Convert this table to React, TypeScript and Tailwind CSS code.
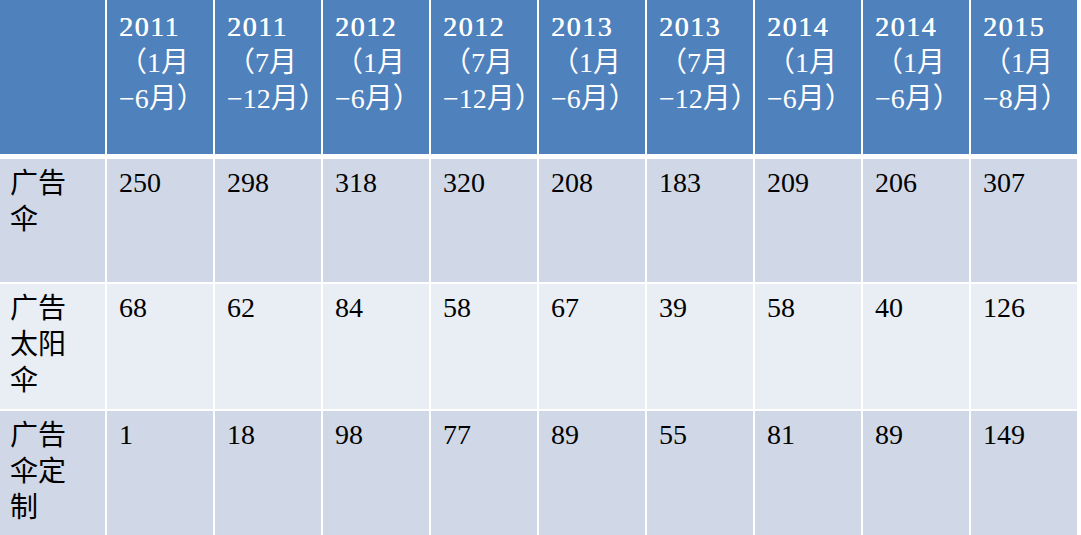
import React from "react";

const headers: [string, string, string][] = [
  ["2011", "（1月", "−6月）"],
  ["2011", "（7月", "−12月）"],
  ["2012", "（1月", "−6月）"],
  ["2012", "（7月", "−12月）"],
  ["2013", "（1月", "−6月）"],
  ["2013", "（7月", "−12月）"],
  ["2014", "（1月", "−6月）"],
  ["2014", "（1月", "−6月）"],
  ["2015", "（1月", "−8月）"],
];

const rows: { label: string[]; values: string[]; bg: string; h: string }[] = [
  {
    label: ["广告", "伞"],
    values: ["250", "298", "318", "320", "208", "183", "209", "206", "307"],
    bg: "bg-[#d0d8e8]",
    h: "h-[123px]",
  },
  {
    label: ["广告", "太阳", "伞"],
    values: ["68", "62", "84", "58", "67", "39", "58", "40", "126"],
    bg: "bg-[#e9edf4]",
    h: "h-[125px]",
  },
  {
    label: ["广告", "伞定", "制"],
    values: ["1", "18", "98", "77", "89", "55", "81", "89", "149"],
    bg: "bg-[#d0d8e8]",
    h: "h-[124px]",
  },
];

const font = "font-['Liberation_Serif','Noto_Sans_CJK_SC',serif]";

export default function App() {
  return (
    <div className={`w-[1081px] h-[535px] bg-white overflow-hidden ${font} text-[28px] leading-[36px]`}>
      <div className="grid grid-cols-[105px_repeat(9,106px)] gap-x-[2px] h-[154px]">
        <div className="bg-[#4f81bd]" />
        {headers.map((h, i) => (
          <div key={i} className="bg-[#4f81bd] text-white pl-[12px] pt-[9px] whitespace-nowrap">
            <div className="tracking-[1.5px] [text-shadow:0.4px_0_0_#fff]">{h[0]}</div>
            <div>{h[1]}</div>
            <div>{h[2]}</div>
          </div>
        ))}
      </div>
      <div className="mt-[5px] flex flex-col gap-y-[2px]">
        {rows.map((r, ri) => (
          <div key={ri} className={`grid grid-cols-[105px_repeat(9,106px)] gap-x-[2px] ${r.h}`}>
            <div className={`${r.bg} text-black pl-[10px] pt-[7px] whitespace-nowrap`}>
              {r.label.map((l, li) => (
                <div key={li}>{l}</div>
              ))}
            </div>
            {r.values.map((v, vi) => (
              <div key={vi} className={`${r.bg} text-black pl-[12px] pt-[6px]`}>
                {v}
              </div>
            ))}
          </div>
        ))}
      </div>
    </div>
  );
}
